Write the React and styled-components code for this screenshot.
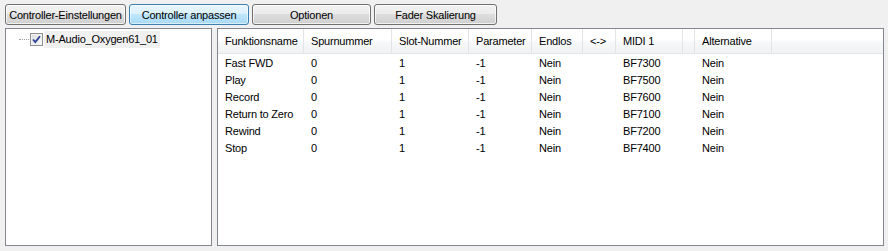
import React from "react";
import styled, { createGlobalStyle } from "styled-components";

const GlobalStyle = createGlobalStyle`
    html, body {
        margin: 0;
        padding: 0;
        background: #f0f0f0;
    }
    body {
        font-family: "Liberation Sans", Arial, sans-serif;
        font-size: 11px;
        letter-spacing: -0.2px;
        color: #000;
    }
`;

const columns = [
    { key: "name", title: "Funktionsname", width: 86 },
    { key: "spur", title: "Spurnummer", width: 88 },
    { key: "slot", title: "Slot-Nummer", width: 77 },
    { key: "param", title: "Parameter", width: 63 },
    { key: "endlos", title: "Endlos", width: 51 },
    { key: "arrow", title: "<->", width: 33 },
    { key: "midi", title: "MIDI 1", width: 67 },
    { key: "blank", title: "", width: 12 },
    { key: "alt", title: "Alternative", width: 77 },
];

const rows = [
    { name: "Fast FWD", midi: "BF7300" },
    { name: "Play", midi: "BF7500" },
    { name: "Record", midi: "BF7600" },
    { name: "Return to Zero", midi: "BF7100" },
    { name: "Rewind", midi: "BF7200" },
    { name: "Stop", midi: "BF7400" },
].map((r) => ({
    ...r,
    spur: "0",
    slot: "1",
    param: "-1",
    endlos: "Nein",
    arrow: "",
    blank: "",
    alt: "Nein",
}));

const buttons = [
    { label: "Controller-Einstellungen", width: 121 },
    { label: "Controller anpassen", width: 120, active: true },
    { label: "Optionen", width: 119 },
    { label: "Fader Skalierung", width: 123 },
];

const CheckMark = () => (
    <svg width="9" height="9" viewBox="0 0 9 9">
        <path d="M1 4.5 L3.3 7 L8 1.2" fill="none" stroke="#2a3f8f" strokeWidth="1.8" />
    </svg>
);

const App = () => {
    return (
        <>
            <GlobalStyle />
            <Window>
                <Toolbar>
                    {buttons.map((b) => (
                        <Button key={b.label} $width={b.width} $active={b.active}>
                            {b.label}
                        </Button>
                    ))}
                </Toolbar>
                <Content>
                    <TreePanel>
                        <TreeItem>
                            <TreeLine />
                            <CheckBox>
                                <CheckMark />
                            </CheckBox>
                            <TreeLabel>M-Audio_Oxygen61_01</TreeLabel>
                        </TreeItem>
                    </TreePanel>
                    <ListPanel>
                        <HeaderRow>
                            {columns.map((c) => (
                                <HeaderCell key={c.key} $width={c.width}>
                                    {c.title}
                                </HeaderCell>
                            ))}
                            <HeaderFill />
                        </HeaderRow>
                        {rows.map((r) => (
                            <DataRow key={r.name}>
                                {columns.map((c) => (
                                    <DataCell key={c.key} $width={c.width}>
                                        {r[c.key]}
                                    </DataCell>
                                ))}
                            </DataRow>
                        ))}
                    </ListPanel>
                </Content>
            </Window>
        </>
    );
};

export default App;

const Window = styled.div`
    width: 888px;
    height: 251px;
    box-sizing: border-box;
    padding: 4px 4px 5px 5px;
    display: flex;
    flex-direction: column;
    gap: 3px;
    overflow: hidden;
`;

const Toolbar = styled.div`
    display: flex;
    gap: 3px;
    height: 21px;
`;

const Button = styled.div`
    width: ${(p) => p.$width}px;
    box-sizing: border-box;
    height: 21px;
    border: 1px solid ${(p) => (p.$active ? "#3c7fb1" : "#707070")};
    border-radius: 3px;
    background: ${(p) =>
        p.$active
            ? "linear-gradient(to bottom, #eaf6fd 0%, #d9f0fc 50%, #bee6fd 50%, #a7d9f5 100%)"
            : "linear-gradient(to bottom, #f2f2f2 0%, #ebebeb 50%, #dddddd 50%, #cfcfcf 100%)"};
    box-shadow: inset 0 0 0 1px ${(p) => (p.$active ? "rgba(255,255,255,0.55)" : "rgba(255,255,255,0.7)")};
    display: flex;
    align-items: center;
    justify-content: center;
    font-size: 11px;
    color: #000;
    white-space: nowrap;
`;

const Content = styled.div`
    flex: 1;
    display: flex;
    gap: 5px;
    min-height: 0;
`;

const TreePanel = styled.div`
    width: 207px;
    box-sizing: border-box;
    border: 1px solid #828790;
    background: #fff;
    padding: 2px 0 0 13px;
`;

const TreeItem = styled.div`
    display: flex;
    align-items: center;
    height: 17px;
`;

const TreeLine = styled.div`
    width: 10px;
    height: 0;
    border-top: 1px dotted #a0a0a0;
    margin-right: 1px;
`;

const CheckBox = styled.div`
    width: 13px;
    height: 13px;
    box-sizing: border-box;
    border: 1px solid #8e8f8f;
    background: linear-gradient(135deg, #dcdcdc 0%, #fbfbfb 100%);
    box-shadow: inset 0 0 0 1px #f4f4f4;
    display: flex;
    align-items: center;
    justify-content: center;
    margin-right: 1px;
`;

const TreeLabel = styled.div`
    background: #f0f0f0;
    height: 17px;
    line-height: 17px;
    padding: 0 2px;
    white-space: nowrap;
`;

const ListPanel = styled.div`
    flex: 1;
    box-sizing: border-box;
    border: 1px solid #828790;
    background: #fff;
    overflow: hidden;
`;

const HeaderRow = styled.div`
    display: flex;
    height: 24px;
    border-bottom: 1px solid #e5e5e5;
    background: linear-gradient(to bottom, #ffffff 0%, #ffffff 45%, #f7f8fa 55%, #f1f2f4 100%);
`;

const HeaderCell = styled.div`
    width: ${(p) => p.$width}px;
    flex: none;
    box-sizing: border-box;
    padding-left: 7px;
    border-right: 1px solid #e3e4e6;
    display: flex;
    align-items: center;
    white-space: nowrap;
    color: #000;
`;

const HeaderFill = styled.div`
    flex: 1;
`;

const DataRow = styled.div`
    display: flex;
    height: 17px;
    align-items: center;
`;

const DataCell = styled.div`
    width: ${(p) => p.$width}px;
    flex: none;
    box-sizing: border-box;
    padding-left: 7px;
    white-space: nowrap;
`;
